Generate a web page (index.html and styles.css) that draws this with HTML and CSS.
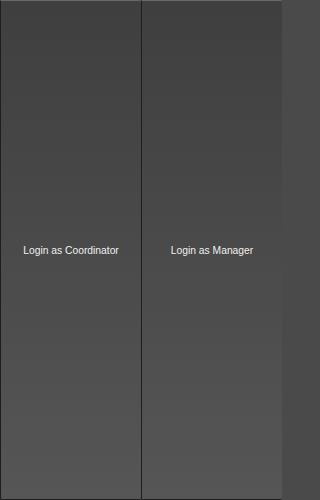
FILE: index.html
```html
<!DOCTYPE html>
<html>
<head>
<meta charset="utf-8">
<link rel="stylesheet" href="styles.css">
</head>
<body>
<div class="row">
  <button class="btn">Login as Coordinator</button>
  <button class="btn">Login as Manager</button>
</div>
</body>
</html>
```

FILE: styles.css
```css
html, body {
  margin: 0;
  padding: 0;
  height: 100%;
  background: #4a4a4a;
}
.row {
  display: flex;
  height: 500px;
  width: 282px;
}
.btn {
  flex: 1 1 0;
  margin: 0;
  padding: 0;
  border: 1px solid #1e1e1e;
  border-top-color: #6a6a6a;
  border-right: none;
  border-radius: 2px;
  background: linear-gradient(to bottom, #3f3f3f 0%, #4a4a4a 50%, #565656 100%);
  color: #eeeeee;
  font-family: "Liberation Sans", Arial, sans-serif;
  font-size: 10.3px;
  cursor: pointer;
}
```
